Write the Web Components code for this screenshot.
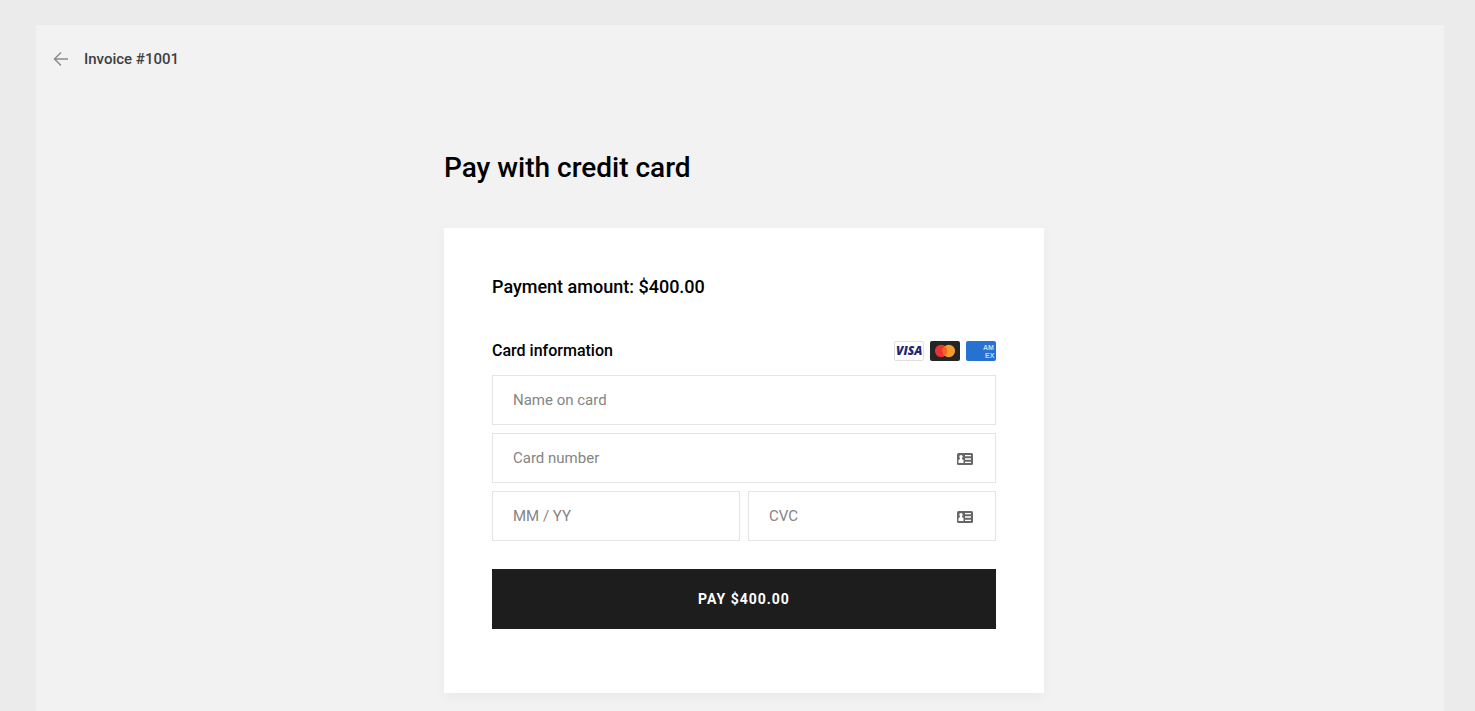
<!DOCTYPE html>
<html lang="en">
<head>
<meta charset="utf-8">
<meta name="viewport" content="width=device-width, initial-scale=1">
<title>Pay invoice</title>
<style>
  body { margin: 0; background: #ebebeb; color: #000; font-family: Roboto, "Liberation Sans", sans-serif; }
</style>
</head>
<body>
<checkout-page>
  <back-bar slot="bar" href="#invoice">Invoice #1001</back-bar>
  <span slot="title">Pay with credit card</span>
  <payment-form amount="$400.00"></payment-form>
</checkout-page>

<template id="page-t">
  <style>
    :host { display: flex; box-sizing: border-box; min-height: 100vh; padding: 25px 31px 0 36px; }
    .panel { flex: 1; min-width: 0; background: #f2f2f2; }
    main { max-width: 600px; margin: 0 auto; padding: 57px 0 18px; }
    .wrap { padding-left: 8px; }
    h1 { margin: 0 0 40px; font-size: 28px; line-height: 40px; font-weight: 500; }
  </style>
  <div class="panel">
    <slot name="bar"></slot>
    <div class="wrap"><main><h1><slot name="title"></slot></h1><slot></slot></main></div>
  </div>
</template>

<template id="bar-t">
  <style>
    :host { display: block; padding: 24px 17px 20px; }
    a { display: inline-flex; align-items: center; gap: 15px; color: #3f3f3f; text-decoration: none; font-size: 15px; line-height: 20px; font-weight: 500; }
    svg { display: block; }
  </style>
  <a><svg width="16" height="16" viewBox="0 0 16 16" fill="none" stroke="#8c8c8c" stroke-width="1.5" aria-hidden="true"><path d="M15 8H1.500M8 1.500 1.500 8 8 14.500"/></svg><slot></slot></a>
</template>

<template id="brands-t">
  <style>
    :host { display: flex; gap: 6px; }
    svg { display: block; }
    text { font-family: "Open Sans", sans-serif; font-weight: 800; }
    .amex text { font-family: "Liberation Sans", sans-serif; font-weight: 700; }
  </style>
  <svg width="30" height="20" viewBox="0 0 30 20" role="img" aria-label="Visa">
    <rect x=".5" y=".5" width="29" height="19" rx="1.5" fill="#fff" stroke="#dfdfdf"/>
    <text x="2" y="14" font-size="12" font-style="italic" fill="#25246f">VISA</text>
  </svg>
  <svg width="30" height="20" viewBox="0 0 30 20" role="img" aria-label="Mastercard">
    <rect width="30" height="20" rx="2" fill="#252525"/>
    <circle cx="11.2" cy="10" r="6.2" fill="#eb3431"/>
    <circle cx="18.8" cy="10" r="6.2" fill="#f19d2f"/>
    <path d="M15 5.1a6.2 6.2 0 0 1 0 9.8a6.2 6.2 0 0 1 0-9.8z" fill="#f26522"/>
  </svg>
  <svg class="amex" width="30" height="20" viewBox="0 0 30 20" role="img" aria-label="American Express">
    <rect width="30" height="20" rx="2" fill="#2671d1"/>
    <g fill="#c4dbf5" font-size="7">
      <text x="17" y="9">AM</text>
      <text x="19" y="17">EX</text>
    </g>
  </svg>
</template>

<template id="field-t">
  <style>
    :host { display: block; position: relative; min-width: 0; }
    input { display: block; box-sizing: border-box; width: 100%; height: 50px; margin: 0; padding: 0 20px; border: 1px solid #e5e5e5; border-radius: 0; background: #fff; color: #000; font: 400 15px/20px Roboto, "Liberation Sans", sans-serif; }
    input::placeholder { color: #858585; opacity: 1; }
    svg { display: none; position: absolute; right: 23px; top: 20px; }
    :host([icon]) svg { display: block; }
    :host([icon]) input { padding-right: 48px; }
  </style>
  <input type="text">
  <svg width="16" height="12" viewBox="0 0 16 12" aria-hidden="true">
    <rect width="16" height="12" rx="1.5" fill="#666"/>
    <circle cx="4" cy="3.700" r="1.700" fill="#fff"/>
    <path fill="#fff" d="M3 4.500h2V6l1.500 1V10h-5V7L3 6zM8 2h6v1.3H8zM8 8.7h6V10H8z"/>
    <path fill="#ddd" d="M8 5h6v2H8z"/>
  </svg>
</template>

<template id="form-t">
  <style>
    :host { display: block; padding: 48px 48px 64px; background: #fff; box-shadow: 0 4px 12px rgba(0,0,0,.04); }
    form { margin: 0; }
    h2 { margin: 0 0 42px; font-size: 18px; line-height: 22px; font-weight: 500; }
    .head { display: flex; align-items: center; justify-content: space-between; margin-bottom: 13px; }
    h3 { margin: 0; font-size: 16px; line-height: 22px; font-weight: 500; }
    .grid { display: grid; grid-template-columns: 1fr 1fr; gap: 8px; margin-bottom: 28px; }
    .wide { grid-column: 1 / -1; }
    button { display: block; width: 100%; height: 60px; margin: 0; padding: 0; border: 0; background: #1d1d1d; color: #fff; font: 700 14px/20px Roboto, "Liberation Sans", sans-serif; letter-spacing: 1px; cursor: pointer; }
  </style>
  <form>
    <h2>Payment amount: <span class="sum"></span></h2>
    <div class="head"><h3>Card information</h3><card-brands></card-brands></div>
    <div class="grid">
      <card-field class="wide" label="Name on card" autocomplete="cc-name"></card-field>
      <card-field class="wide" label="Card number" autocomplete="cc-number" icon></card-field>
      <card-field label="MM / YY" autocomplete="cc-exp"></card-field>
      <card-field label="CVC" autocomplete="cc-csc" icon></card-field>
    </div>
    <button type="button"></button>
  </form>
</template>

<script>
  class Base extends HTMLElement {
    constructor() {
      super();
      const t = document.getElementById(this.constructor.template);
      this.attachShadow({ mode: "open" }).append(document.importNode(t.content, true));
    }
    $(s) { return this.shadowRoot.querySelector(s); }
  }
  class CardField extends Base {
    static template = "field-t";
    connectedCallback() {
      const input = this.$("input");
      input.placeholder = this.getAttribute("label");
      input.setAttribute("aria-label", this.getAttribute("label"));
      input.autocomplete = this.getAttribute("autocomplete");
    }
  }
  class CardBrands extends Base { static template = "brands-t"; }
  class BackBar extends Base {
    static template = "bar-t";
    connectedCallback() { this.$("a").href = this.getAttribute("href"); }
  }
  class PaymentForm extends Base {
    static template = "form-t";
    connectedCallback() {
      const amount = this.getAttribute("amount");
      this.$(".sum").textContent = amount;
      this.$("button").textContent = "PAY " + amount;
    }
  }
  class CheckoutPage extends Base { static template = "page-t"; }
  customElements.define("card-field", CardField);
  customElements.define("card-brands", CardBrands);
  customElements.define("back-bar", BackBar);
  customElements.define("payment-form", PaymentForm);
  customElements.define("checkout-page", CheckoutPage);
</script>
</body>
</html>
